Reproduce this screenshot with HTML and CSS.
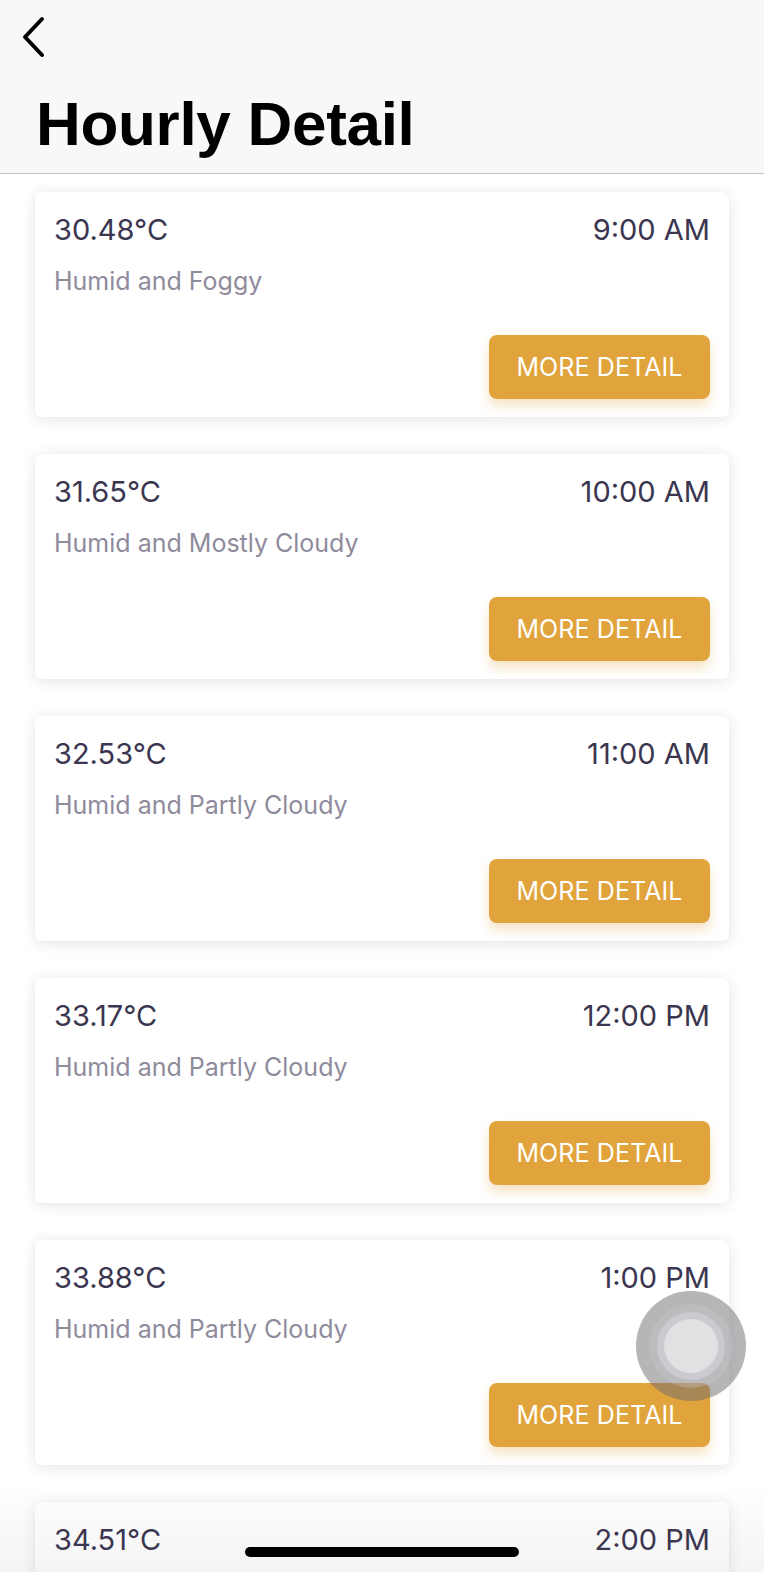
FILE: index.html
```html
<!DOCTYPE html>
<html>
<head>
<meta charset="utf-8">
<link rel="stylesheet" href="styles.css">
</head>
<body>
<div class="screen">
  <header class="header">
    <div class="back">
      <svg width="30" height="42" viewBox="0 0 30 42"><path d="M22 3 L5 21 L22 39" fill="none" stroke="#000" stroke-width="4" stroke-linecap="round" stroke-linejoin="round"/></svg>
    </div>
    <h1 class="title">Hourly Detail</h1>
  </header>
  <main class="list">
    <div class="card">
      <div class="row"><span class="temp">30.48°C</span><span class="time">9:00 AM</span></div>
      <div class="desc">Humid and Foggy</div>
      <div class="actions"><button class="btn">MORE DETAIL</button></div>
    </div>
    <div class="card">
      <div class="row"><span class="temp">31.65°C</span><span class="time">10:00 AM</span></div>
      <div class="desc">Humid and Mostly Cloudy</div>
      <div class="actions"><button class="btn">MORE DETAIL</button></div>
    </div>
    <div class="card">
      <div class="row"><span class="temp">32.53°C</span><span class="time">11:00 AM</span></div>
      <div class="desc">Humid and Partly Cloudy</div>
      <div class="actions"><button class="btn">MORE DETAIL</button></div>
    </div>
    <div class="card">
      <div class="row"><span class="temp">33.17°C</span><span class="time">12:00 PM</span></div>
      <div class="desc">Humid and Partly Cloudy</div>
      <div class="actions"><button class="btn">MORE DETAIL</button></div>
    </div>
    <div class="card">
      <div class="row"><span class="temp">33.88°C</span><span class="time">1:00 PM</span></div>
      <div class="desc">Humid and Partly Cloudy</div>
      <div class="actions"><button class="btn">MORE DETAIL</button></div>
    </div>
    <div class="card">
      <div class="row"><span class="temp">34.51°C</span><span class="time">2:00 PM</span></div>
    </div>
  </main>
  <div class="bottom-fade"></div>
  <div class="assist"><div class="ring1"><div class="ring2"><div class="dot"></div></div></div></div>
  <div class="home-indicator"></div>
</div>
</body>
</html>
```
FILE: styles.css
```css
html, body {
  margin: 0;
  padding: 0;
  background: #ffffff;
}
body {
  font-family: "Inter", "Liberation Sans", sans-serif;
}
.screen {
  width: 764px;
  height: 1572px;
  overflow: hidden;
  position: relative;
  background: #ffffff;
}
.header {
  height: 174px;
  background: #f9f7fa;
  border-bottom: 1px solid #c4c2c8;
  box-sizing: border-box;
  padding-top: 16px;
}
.back {
  padding-left: 20px;
  height: 42px;
}
.back svg {
  display: block;
}
.title {
  margin: 31px 0 0 36px;
  font-family: "Liberation Sans", "Inter", sans-serif;
  font-weight: 700;
  font-size: 62px;
  line-height: 70px;
  color: #000;
  letter-spacing: -0.3px;
}
.list {
  display: flex;
  flex-direction: column;
  gap: 37px;
  padding: 18px 35px 0 35px;
}
.card {
  background: #ffffff;
  border-radius: 7px;
  box-shadow: 0 2px 14px rgba(60, 50, 80, 0.14);
  height: 225px;
  box-sizing: border-box;
  padding: 20px 19px 18px 19px;
  display: flex;
  flex-direction: column;
  flex-shrink: 0;
}
.row {
  display: flex;
  justify-content: space-between;
  font-size: 29px;
  line-height: 36px;
  color: #3b3650;
}
.desc {
  margin-top: 18px;
  font-size: 25px;
  line-height: 30px;
  color: #8f8b9c;
}
.actions {
  margin-top: auto;
  display: flex;
  justify-content: flex-end;
}
.btn {
  width: 221px;
  height: 64px;
  border: none;
  border-radius: 8px;
  background: #e1a33b;
  color: #ffffff;
  font-family: "Inter", "Liberation Sans", sans-serif;
  font-size: 25px;
  letter-spacing: 0.1px;
  box-shadow: 0 7px 12px rgba(225, 163, 59, 0.3);
  padding: 0;
}
.bottom-fade {
  position: absolute;
  left: 0;
  right: 0;
  bottom: 0;
  height: 90px;
  background: linear-gradient(to bottom, rgba(80, 70, 90, 0) 0%, rgba(80, 70, 90, 0.06) 100%);
  pointer-events: none;
}
.assist {
  position: absolute;
  left: 636px;
  top: 1291px;
  width: 110px;
  height: 110px;
  border-radius: 50%;
  background: rgba(110, 108, 112, 0.5);
  display: flex;
  align-items: center;
  justify-content: center;
}
.ring1 {
  width: 84px;
  height: 84px;
  border-radius: 50%;
  background: rgba(200, 198, 202, 0.35);
  display: flex;
  align-items: center;
  justify-content: center;
}
.ring2 {
  width: 68px;
  height: 68px;
  border-radius: 50%;
  background: rgba(220, 218, 222, 0.5);
  display: flex;
  align-items: center;
  justify-content: center;
}
.dot {
  width: 54px;
  height: 54px;
  border-radius: 50%;
  background: #e1e0e3;
}
.home-indicator {
  position: absolute;
  left: 245px;
  top: 1547px;
  width: 274px;
  height: 10px;
  border-radius: 5px;
  background: #000;
}
```
